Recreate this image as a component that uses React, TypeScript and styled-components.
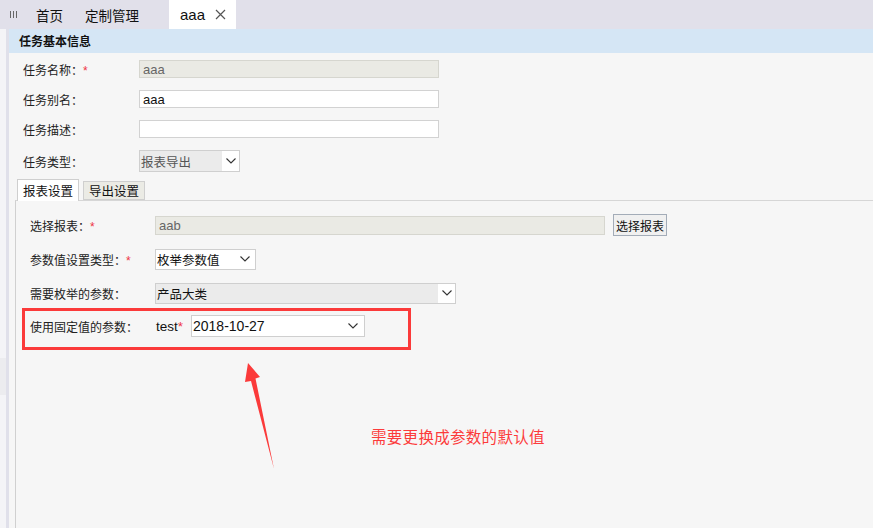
import styled, { createGlobalStyle } from "styled-components";

const GlobalStyle = createGlobalStyle`
  html, body {
    margin: 0;
    padding: 0;
  }
  body {
    font-family: "Liberation Sans", "Noto Sans CJK SC", sans-serif;
    font-size: 12px;
    color: #222222;
    background: #f6f6f6;
  }
`;

const Page = styled.div`
  position: relative;
  display: flex;
  flex-direction: column;
  width: 873px;
  height: 528px;
  overflow: hidden;
`;

const TopBar = styled.div`
  display: flex;
  align-items: stretch;
  height: 29px;
  background: #e1e0ea;
  flex-shrink: 0;
`;

const Grip = styled.div`
  display: flex;
  align-items: center;
  width: 25px;
  padding-left: 10px;
  box-sizing: border-box;
`;

const NavTab = styled.div<{ $active?: boolean }>`
  display: flex;
  align-items: center;
  gap: 10px;
  padding: 0 ${(p) => (p.$active ? "10px" : "11px")} 0 11px;
  margin-left: ${(p) => (p.$active ? "19px" : "0")};
  background: ${(p) => (p.$active ? "#ffffff" : "transparent")};
  font-family: "Liberation Sans", "Noto Sans CJK SC", sans-serif;
  font-size: ${(p) => (p.$active ? "15px" : "13.5px")};
  color: #111111;
`;

const Body = styled.div`
  display: flex;
  flex: 1;
  min-height: 0;
`;

const LeftRail = styled.div`
  width: 9px;
  box-sizing: border-box;
  background: #f4f4f7;
  border-right: 3px solid #e0e0ea;
  flex-shrink: 0;
`;

const RailThumb = styled.div`
  margin-top: 329px;
  height: 37px;
  background: #ececef;
`;

const Content = styled.div`
  display: flex;
  flex-direction: column;
  flex: 1;
  background: #f6f6f6;
`;

const SectionHeader = styled.div`
  height: 24px;
  line-height: 24px;
  padding-left: 10px;
  background: #d5e6f5;
  font-family: "Noto Sans CJK SC", sans-serif;
  font-weight: 700;
  font-size: 12px;
  color: #111111;
`;

const BasicForm = styled.div`
  display: flex;
  flex-direction: column;
  padding: 1px 0 0 14px;
`;

const FieldRow = styled.div<{ $h?: number; $mt?: number }>`
  display: flex;
  align-items: center;
  height: ${(p) => p.$h ?? 30}px;
  margin-top: ${(p) => p.$mt ?? 0}px;
`;

const Label = styled.div<{ $w: number }>`
  width: ${(p) => p.$w}px;
  flex-shrink: 0;
  font-family: "Noto Sans CJK SC", sans-serif;
  font-size: 12px;
  color: #222222;
  white-space: nowrap;
`;

const Star = styled.span`
  color: #ee3344;
  margin-left: 0;
  font-family: "Liberation Sans", sans-serif;
`;

const TextInput = styled.div<{ $w: number; $h?: number; $disabled?: boolean }>`
  display: flex;
  align-items: center;
  box-sizing: border-box;
  width: ${(p) => p.$w}px;
  height: ${(p) => p.$h ?? 18}px;
  padding-left: 3px;
  background: ${(p) => (p.$disabled ? "#eaeae4" : "#ffffff")};
  border: 1px solid ${(p) => (p.$disabled ? "#d6d6cf" : "#d2d2d2")};
  font-family: "Liberation Sans", "Noto Sans CJK SC", sans-serif;
  font-size: 13px;
  color: ${(p) => (p.$disabled ? "#666666" : "#111111")};
`;

const SelectBox = styled.div<{ $w: number; $h?: number }>`
  display: flex;
  box-sizing: border-box;
  width: ${(p) => p.$w}px;
  height: ${(p) => p.$h ?? 22}px;
  border: 1px solid #cfcfcf;
  background: #ffffff;
`;

const SelectText = styled.div<{ $gray?: boolean; $latin?: boolean; $dark?: boolean }>`
  display: flex;
  align-items: center;
  flex: 1;
  padding-left: 1px;
  background: ${(p) => (p.$gray ? "#ebebeb" : "#ffffff")};
  font-family: ${(p) =>
    p.$latin
      ? `"Liberation Sans", "Noto Sans CJK SC", sans-serif`
      : `"Noto Sans CJK SC", sans-serif`};
  font-size: ${(p) => (p.$latin ? "14px" : "12.5px")};
  color: ${(p) => (p.$gray && !p.$dark ? "#555555" : "#111111")};
`;

const SelectArrow = styled.div<{ $w?: number }>`
  display: flex;
  align-items: center;
  justify-content: center;
  width: ${(p) => p.$w ?? 17}px;
  background: #ffffff;
`;

const TabArea = styled.div`
  display: flex;
  flex-direction: column;
  flex: 1;
  margin: 3px 0 0 6px;
`;

const TabStrip = styled.div`
  display: flex;
  align-items: flex-end;
  gap: 4px;
  height: 22px;
  padding-left: 2px;
  position: relative;
  z-index: 1;
  margin-bottom: -1px;
`;

const Tab = styled.div<{ $active?: boolean }>`
  display: flex;
  align-items: center;
  box-sizing: border-box;
  height: ${(p) => (p.$active ? 22 : 19)}px;
  margin-bottom: ${(p) => (p.$active ? 0 : 1)}px;
  padding: 0 5px;
  background: ${(p) => (p.$active ? "#ffffff" : "#ebebe5")};
  border: 1px solid #cfcfcf;
  border-bottom: ${(p) => (p.$active ? "none" : "1px solid #cfcfcf")};
  font-family: "Noto Sans CJK SC", sans-serif;
  font-size: 12.5px;
  color: #111111;
`;

const Panel = styled.div`
  display: flex;
  flex-direction: column;
  flex: 1;
  border-top: 1px solid #d6d6d6;
  border-left: 1px solid #d0d0d0;
  padding: 7px 0 0 14px;
`;

const PickButton = styled.div`
  display: flex;
  align-items: center;
  justify-content: center;
  box-sizing: border-box;
  width: 54px;
  height: 22px;
  margin-left: 8px;
  background: #f0f0f0;
  border: 1px solid #a3acb8;
  font-family: "Noto Sans CJK SC", sans-serif;
  font-size: 12px;
  color: #111111;
`;

const Highlight = styled.div`
  box-sizing: border-box;
  width: 389px;
  height: 42px;
  margin: -2px 0 0 -8px;
  padding: 4px 0 0 5px;
  border: 3px solid #fb3a3a;
`;

const ParamName = styled.div`
  width: 35px;
  font-family: "Liberation Sans", sans-serif;
  font-size: 13.5px;
  color: #111111;

  span {
    color: #ee3344;
  }
`;

const ArrowMark = styled.svg`
  position: absolute;
  left: 0;
  top: 0;
  pointer-events: none;
`;

const Note = styled.div`
  position: absolute;
  left: 371px;
  top: 425px;
  font-family: "Noto Sans CJK SC", sans-serif;
  font-size: 15.5px;
  color: #fc3b3b;
  letter-spacing: 0.3px;
`;

const Chevron = () => (
  <svg width="10" height="6" viewBox="0 0 10 6">
    <polyline points="0.5,0.5 5,5 9.5,0.5" fill="none" stroke="#333" strokeWidth="1.1" />
  </svg>
);

const Close = () => (
  <svg width="11" height="11" viewBox="0 0 11 11">
    <path d="M1 1L10 10M10 1L1 10" stroke="#555" strokeWidth="1.2" />
  </svg>
);

const GripIcon = () => (
  <svg width="8" height="7" viewBox="0 0 8 7">
    <path d="M0.5 0V7M3.5 0V7M6.5 0V7" stroke="#666" strokeWidth="1" />
  </svg>
);

const App = () => {
  return (
    <Page>
      <GlobalStyle />
      <TopBar>
        <Grip>
          <GripIcon />
        </Grip>
        <NavTab>首页</NavTab>
        <NavTab>定制管理</NavTab>
        <NavTab $active>
          aaa
          <Close />
        </NavTab>
      </TopBar>

      <Body>
        <LeftRail>
          <RailThumb />
        </LeftRail>
        <Content>
          <SectionHeader>任务基本信息</SectionHeader>
          <BasicForm>
            <FieldRow>
              <Label $w={116}>
                任务名称：<Star>*</Star>
              </Label>
              <TextInput $w={300} $disabled>
                aaa
              </TextInput>
            </FieldRow>
            <FieldRow>
              <Label $w={116}>任务别名：</Label>
              <TextInput $w={300}>aaa</TextInput>
            </FieldRow>
            <FieldRow>
              <Label $w={116}>任务描述：</Label>
              <TextInput $w={300} />
            </FieldRow>
            <FieldRow $mt={2}>
              <Label $w={116}>任务类型：</Label>
              <SelectBox $w={101}>
                <SelectText $gray>报表导出</SelectText>
                <SelectArrow $w={17}>
                  <Chevron />
                </SelectArrow>
              </SelectBox>
            </FieldRow>
          </BasicForm>

          <TabArea>
            <TabStrip>
              <Tab $active>报表设置</Tab>
              <Tab>导出设置</Tab>
            </TabStrip>
            <Panel>
              <FieldRow $h={34}>
                <Label $w={125}>
                  选择报表：<Star>*</Star>
                </Label>
                <TextInput $w={450} $h={19} $disabled>
                  aab
                </TextInput>
                <PickButton>选择报表</PickButton>
              </FieldRow>
              <FieldRow $h={34}>
                <Label $w={125}>
                  参数值设置类型：<Star>*</Star>
                </Label>
                <SelectBox $w={101} $h={21}>
                  <SelectText>枚举参数值</SelectText>
                  <SelectArrow $w={20}>
                    <Chevron />
                  </SelectArrow>
                </SelectBox>
              </FieldRow>
              <FieldRow $h={34}>
                <Label $w={125}>需要枚举的参数：</Label>
                <SelectBox $w={301} $h={21}>
                  <SelectText $gray $dark>
                    产品大类
                  </SelectText>
                  <SelectArrow $w={17}>
                    <Chevron />
                  </SelectArrow>
                </SelectBox>
              </FieldRow>
              <Highlight>
                <FieldRow $h={22}>
                  <Label $w={126}>使用固定值的参数：</Label>
                  <ParamName>
                    test<span>*</span>
                  </ParamName>
                  <SelectBox $w={174}>
                    <SelectText $latin>2018-10-27</SelectText>
                    <SelectArrow $w={22}>
                      <Chevron />
                    </SelectArrow>
                  </SelectBox>
                </FieldRow>
              </Highlight>
            </Panel>
          </TabArea>
        </Content>
      </Body>

      <ArrowMark width="873" height="528" viewBox="0 0 873 528">
        <polygon
          points="248,363 260,377 255.5,378.5 274,469 251,381 245,382"
          fill="#fb3a3a"
        />
      </ArrowMark>
      <Note>需要更换成参数的默认值</Note>
    </Page>
  );
};

export default App;
